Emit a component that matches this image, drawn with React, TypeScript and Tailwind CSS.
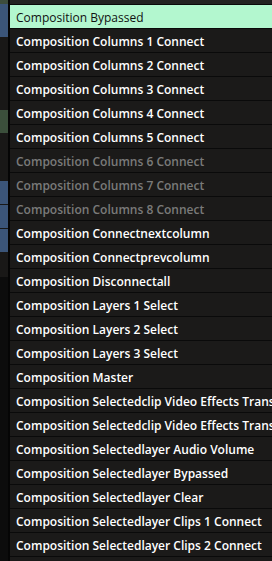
import React from 'react';

type Item = { label: string; disabled?: boolean };

const items: Item[] = [
  { label: 'Composition Bypassed' },
  { label: 'Composition Columns 1 Connect' },
  { label: 'Composition Columns 2 Connect' },
  { label: 'Composition Columns 3 Connect' },
  { label: 'Composition Columns 4 Connect' },
  { label: 'Composition Columns 5 Connect' },
  { label: 'Composition Columns 6 Connect', disabled: true },
  { label: 'Composition Columns 7 Connect', disabled: true },
  { label: 'Composition Columns 8 Connect', disabled: true },
  { label: 'Composition Connectnextcolumn' },
  { label: 'Composition Connectprevcolumn' },
  { label: 'Composition Disconnectall' },
  { label: 'Composition Layers 1 Select' },
  { label: 'Composition Layers 2 Select' },
  { label: 'Composition Layers 3 Select' },
  { label: 'Composition Master' },
  { label: 'Composition Selectedclip Video Effects Transform Position X' },
  { label: 'Composition Selectedclip Video Effects Transform Position Y' },
  { label: 'Composition Selectedlayer Audio Volume' },
  { label: 'Composition Selectedlayer Bypassed' },
  { label: 'Composition Selectedlayer Clear' },
  { label: 'Composition Selectedlayer Clips 1 Connect' },
  { label: 'Composition Selectedlayer Clips 2 Connect' },
  { label: 'Composition Selectedlayer Clips 3 Connect' },
];

// strip of the app behind the menu (left edge)
const strip = [
  { h: 'h-[4px]', c: 'bg-[#3d4d3d]' },
  { h: 'h-[33px]', c: 'bg-[#3b5579]' },
  { h: 'h-[73px]', c: 'bg-[#191817]' },
  { h: 'h-[23px]', c: 'bg-[#3b4f3b]' },
  { h: 'h-[48px]', c: 'bg-[#191817]' },
  { h: 'h-[23px]', c: 'bg-[#3b5579]' },
  { h: 'h-[1px]', c: 'bg-[#191817]' },
  { h: 'h-[23px]', c: 'bg-[#3b5579]' },
  { h: 'h-[1px]', c: 'bg-[#191817]' },
  { h: 'h-[23px]', c: 'bg-[#3b5579]' },
  { h: 'h-[25px]', c: 'bg-[#191817]' },
];

export default function App() {
  return (
    <div
      className="flex h-[561px] w-[272px] overflow-hidden bg-[#0c0c0c]"
      style={{ fontFamily: '"Open Sans", "DejaVu Sans", sans-serif' }}
    >
      <div className="flex w-[8px] shrink-0 flex-col">
        {strip.map((s, i) => (
          <div key={i} className={`${s.h} ${s.c} shrink-0`} />
        ))}
      </div>
      <div className="w-[2px] shrink-0 bg-[#050505]" />
      <div className="flex min-w-0 flex-1 flex-col">
        <div className="h-[5px] shrink-0 border-b border-[#0a0a0a] bg-[#232221]" />
        {items.map((it, i) => (
          <div
            key={i}
            className={`flex h-[24px] shrink-0 items-center overflow-hidden whitespace-nowrap border-b border-[#0a0a0a] pl-[6px] pt-[2px] text-[12px] leading-none ${
              i === 0
                ? 'bg-[#b3f7cf] font-normal text-[#111]'
                : it.disabled
                  ? 'bg-[#1b1a19] font-semibold text-[#7a7a7a]'
                  : 'bg-[#1b1a19] font-semibold text-white'
            }`}
          >
            {it.label}
          </div>
        ))}
      </div>
    </div>
  );
}
